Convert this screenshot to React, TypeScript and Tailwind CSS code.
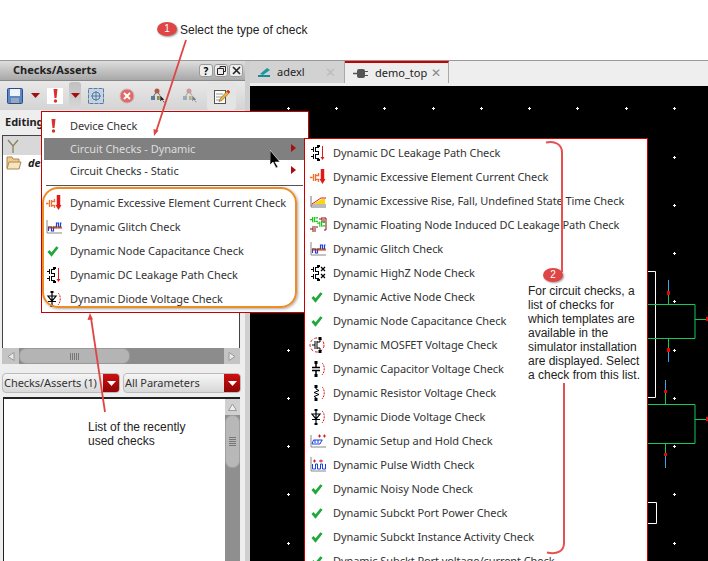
import React from "react";

const Tr = ({ c = "#000" }: { c?: string }) => (
  <g stroke={c} strokeWidth="1" fill="none" shapeRendering="crispEdges">
    <path d="M1.500 5.500h2M4.500 3v5M6.500 3v5M7 3.500h2.500V2M7 7.500h2.500V9M1.500 12.500h2M4.500 10v5M6.500 10v5M7 10.500h2.500V9M7 14.500h2.500V16" />
    <path d="M8 1h3v2H8zM8 15h3v2H8z" fill={c} stroke="none" />
  </g>
);
const Box = ({ children }: { children: React.ReactNode }) => (
  <svg width="18" height="18" viewBox="0 0 18 18" className="block">{children}</svg>
);
const Check = () => <Box><path d="M3.500 9l3 3.500 6-7.500" stroke="#1fa83c" strokeWidth="2.800" fill="none" /></Box>;
const Leak = () => <Box><Tr /><path d="M13.500 2v12" stroke="#e01818" /><path d="M11.500 13h4l-2 3z" fill="#e01818" /></Box>;
const Excess = () => <Box><path d="M1 9.500h2.500M4.500 6v7M6.500 6v7M7 7.500h2.500V5M7 11.500h2.500V14" stroke="#f4702a" strokeWidth="1.300" fill="none" /><path d="M13.500 1v10" stroke="#e01818" strokeWidth="3.500" /><path d="M10.500 11h6l-3 5z" fill="#e01818" /></Box>;
const Rise = () => <Box><path d="M2 4v11h15M2 13h15" stroke="#777" fill="none" /><path d="M4 12l9-5h3v5z" fill="#f5d90a" /><path d="M3 12l9-6h5" stroke="#e01818" fill="none" /></Box>;
const Floating = () => <Box><g transform="scale(.9)"><path d="M1 4h3M4 1v6M6 1v6M7 2h3M7 6h3M9 8h3M12 6v6M14 6v6M15 7h3M15 11h3" stroke="#18c818" strokeWidth="1.300" fill="none" /></g><path d="M1 13h3M4 10v6M6 10v6M7 11h2M10 3h3M13 1v5M15 1v5M16 2h1v12h-2" stroke="#8a1010" fill="none" /></Box>;
const Glitch = () => <Box><path d="M2 2v13h15" stroke="#888" fill="none" /><path d="M3 9h14" stroke="#f5d90a" strokeWidth="2" /><path d="M3.500 13V9h3v4h2V9h3V5h2v4h2V5h1" stroke="#1a3fe0" strokeWidth="1.200" fill="none" /><path d="M3 10h14" stroke="#e01818" /></Box>;
const HighZ = () => <Box><Tr /><path d="M12 3l4 4M16 3l-4 4M12 10l4 4M16 10l-4 4" stroke="#000" strokeWidth="1.200" /></Box>;
const Dash = ({ d = "M13 3c3 2 3 9 0 12" }: { d?: string }) => <path d={d} stroke="#e01818" strokeDasharray="2 1" fill="none" />;
const Mosfet = () => <Box><circle cx="8" cy="9" r="7" stroke="#e01818" strokeDasharray="3 2" fill="none" /><path d="M3 9h3M6 5v8M8 5v8M8 6h3V2M8 12h3v4" stroke="#000" fill="none" /><rect x="9.500" y="1" width="3" height="3" /><rect x="9.500" y="14" width="3" height="3" /></Box>;
const Cap = () => <Box><path d="M7 2v5M7 11v5M3 7.500h8M3 10.500h8" stroke="#000" strokeWidth="1.500" /><rect x="5.500" y="1" width="3" height="3" /><rect x="5.500" y="14" width="3" height="3" /><Dash /></Box>;
const Res = () => <Box><path d="M7 3v2l3 1.500-5 2 5 2-5 2 2 1v2" stroke="#000" fill="none" /><rect x="5.500" y="1" width="3" height="3" /><rect x="5.500" y="14" width="3" height="3" /><Dash /></Box>;
const Diode = () => <Box><path d="M7 2v14M3 6h8L7 11zM3 11.500h8" stroke="#000" strokeWidth="1.200" fill="none" /><rect x="5.500" y="1" width="3" height="2" /><rect x="5.500" y="15" width="3" height="2" /><Dash /></Box>;
const Setup = () => <Box><path d="M2 3v12h15" stroke="#888" fill="none" /><path d="M3 12l1.500-4h9M3 12h8l2-4" stroke="#1a3fe0" fill="none" /><path d="M6 11V8M9 11V8" stroke="#1a3fe0" /><path d="M9 4h3M14 4h3M10.500 2.500v3M15.500 2.500v3" stroke="#e01818" /></Box>;
const Pulse = () => <Box><path d="M2 1v14h15" stroke="#888" fill="none" /><path d="M3.500 8v5h3V8h2v5h3V8h2v5h3V8" stroke="#1a3fe0" fill="none" /><path d="M4 5h3M10 5h4M5.500 3.500v3M12 3.500v3" stroke="#e01818" /></Box>;

const sub: [React.ReactNode, string][] = [
  [<Leak />, "Dynamic DC Leakage Path Check"],
  [<Excess />, "Dynamic Excessive Element Current Check"],
  [<Rise />, "Dynamic Excessive Rise, Fall, Undefined State Time Check"],
  [<Floating />, "Dynamic Floating Node Induced DC Leakage Path Check"],
  [<Glitch />, "Dynamic Glitch Check"],
  [<HighZ />, "Dynamic HighZ Node Check"],
  [<Check />, "Dynamic Active Node Check"],
  [<Check />, "Dynamic Node Capacitance Check"],
  [<Mosfet />, "Dynamic MOSFET Voltage Check"],
  [<Cap />, "Dynamic Capacitor Voltage Check"],
  [<Res />, "Dynamic Resistor Voltage Check"],
  [<Diode />, "Dynamic Diode Voltage Check"],
  [<Setup />, "Dynamic Setup and Hold Check"],
  [<Pulse />, "Dynamic Pulse Width Check"],
  [<Check />, "Dynamic Noisy Node Check"],
  [<Check />, "Dynamic Subckt Port Power Check"],
  [<Check />, "Dynamic Subckt Instance Activity Check"],
  [<Check />, "Dynamic Subckt Port voltage/current Check"],
];
const recent: [React.ReactNode, string][] = [
  [<Excess />, "Dynamic Excessive Element Current Check"],
  [<Glitch />, "Dynamic Glitch Check"],
  [<Check />, "Dynamic Node Capacitance Check"],
  [<Leak />, "Dynamic DC Leakage Path Check"],
  [<Diode />, "Dynamic Diode Voltage Check"],
];

const Tri = ({ white }: { white?: boolean }) => (
  <svg width="9" height="5" viewBox="0 0 9 5"><path d="M0 0h9L4.500 5z" fill={white ? "#fff" : "#a50f0f"} /></svg>
);
const TitleBtn = ({ children }: { children: React.ReactNode }) => (
  <div className="w-[14px] h-[13px] border border-[#999] rounded-[3px] bg-[#eeeeee] flex items-center justify-center">{children}</div>
);
const Tool = ({ children, cls = "" }: { children: React.ReactNode; cls?: string }) => (
  <div className={"flex items-center justify-center h-[28px] " + cls}>{children}</div>
);
const Combo = ({ label, w }: { label: string; w: string }) => (
  <div className={"flex h-[20px] rounded-[4px] border border-[#bbb] bg-gradient-to-b from-[#f6f6f6] to-[#d8d8d8] overflow-hidden " + w}>
    <div className="flex-1 pl-[1px] text-[11px] tracking-[-0.05px] leading-[18px] text-[#333] whitespace-nowrap overflow-hidden">{label}</div>
    <div className="w-[16px] shrink-0 bg-gradient-to-b from-[#cf1010] to-[#8f0606] flex items-center justify-center"><Tri white /></div>
  </div>
);
const Tree = ({ dim }: { dim?: boolean }) => (
  <svg width="16" height="16" viewBox="0 0 16 16" className={dim ? "opacity-50" : ""}><path d="M7 3L3 9M7 3l4 6" stroke="#666" /><circle cx="7" cy="3" r="2.500" fill="#b25a4a" /><rect x="1" y="8" width="4" height="4" fill="#5f7a96" /><rect x="7" y="8" width="4" height="4" fill="#8c8a50" /><path d="M10 7v7l2-2 2 3 1-1-2-2h2z" fill="#222" stroke="#fff" strokeWidth=".5" /></svg>
);
const Bang = () => (
  <svg width="5" height="14" viewBox="0 0 5 14"><path d="M.5 0h4L3.500 9h-2z" fill="#d93030" /><circle cx="2.500" cy="12" r="1.700" fill="#d93030" /></svg>
);

const xs = [288, 336, 384, 433, 481, 529, 577, 626, 674];
const ys = [108, 157, 205, 253, 301, 350, 398, 446, 494, 543];

export default function App() {
  return (
    <div className="relative w-[708px] h-[561px] overflow-hidden bg-white font-['Noto_Sans',sans-serif]">
      <div className="h-[61px] border-b border-[#999]" />
      <div className="flex h-[500px]">
        {/* Left dock */}
        <div className="w-[245px] shrink-0 flex flex-col bg-[#eeeeee]">
          <div className="h-[20px] flex items-center pl-[13px] pr-[2px] bg-gradient-to-b from-[#dedede] to-[#a8a8a8] border-b border-[#888]">
            <span className="flex-1 text-[11px] font-bold text-[#222]">Checks/Asserts</span>
            <div className="flex gap-[1px]">
              <TitleBtn><span className="text-[10px] font-bold leading-none">?</span></TitleBtn>
              <TitleBtn><svg width="9" height="9" viewBox="0 0 9 9"><path d="M3 2V.5h5.500v5H6.500M.5 2.500h6v6h-6z" fill="none" stroke="#222" /></svg></TitleBtn>
              <TitleBtn><svg width="9" height="9" viewBox="0 0 9 9"><path d="M1 1l7 7M8 1l-7 7" stroke="#222" strokeWidth="1.600" /></svg></TitleBtn>
            </div>
          </div>
          <div className="h-[29px] flex items-center bg-gradient-to-b from-[#e8e8e8] to-[#d4d4d4]">
            <Tool cls="w-[16px] ml-[7px]"><svg width="16" height="16" viewBox="0 0 16 16"><rect x=".5" y=".5" width="15" height="15" rx="1" fill="#5d88c4" stroke="#2a4f88" /><rect x="3" y="1" width="10" height="7" fill="#eef3fa" /><rect x="4" y="10" width="8" height="5" fill="#98a8bc" /></svg></Tool>
            <Tool cls="w-[9px] ml-[8px]"><Tri /></Tool>
            <Tool cls="w-[16px] ml-[7px]"><div className="w-[16px] h-[16px] bg-white flex items-center justify-center"><Bang /></div></Tool>
            <Tool cls="w-[12px] ml-[6px] rounded-[3px] bg-gradient-to-b from-[#c0c0c0] to-[#d8d8d8]"><Tri /></Tool>
            <Tool cls="w-[16px] ml-[7px]"><svg width="16" height="16" viewBox="0 0 16 16"><rect x=".5" y=".5" width="15" height="15" fill="#c5d4e4" stroke="#5b7b9e" strokeDasharray="4 1" /><circle cx="8" cy="8" r="4" fill="none" stroke="#5b7b9e" /><path d="M8 3v10M3 8h10" stroke="#5b7b9e" /></svg></Tool>
            <Tool cls="w-[16px] ml-[15px]"><svg width="16" height="16" viewBox="0 0 16 16"><circle cx="8" cy="8" r="7" fill="#e06a6a" stroke="#d7b0b0" /><path d="M5 5l6 6M11 5l-6 6" stroke="#fff" strokeWidth="2" /></svg></Tool>
            <Tool cls="w-[16px] ml-[15px]"><Tree /></Tool>
            <Tool cls="w-[16px] ml-[16px]"><Tree dim /></Tool>
            <Tool cls="w-[29px] ml-[9px] rounded-[3px] bg-[#e4e4e4]"><svg width="16" height="16" viewBox="0 0 16 16"><rect x=".5" y="2.500" width="11" height="13" fill="#fff" stroke="#555" /><path d="M2 6h7M2 9h6M2 12h5" stroke="#999" /><path d="M6 11L14 2l2 2-8 8.500-3 1z" fill="#e8b93c" stroke="#8a5a1a" strokeWidth=".6" /><path d="M14 2l2 2-1.500 1.500-2-2z" fill="#d93030" /></svg></Tool>
          </div>
          <div className="h-[25px] pl-[5px] pt-[4px] text-[11px] leading-[16px] font-bold text-[#222]">Editing</div>
          <div className="ml-[2px] mr-[5px] h-[213px] border-l border-r border-t border-[#444] bg-white">
            <div className="h-[19px] bg-[#d8d8d8] pl-[4px] flex items-center">
              <svg width="12" height="14" viewBox="0 0 12 14"><path d="M1 1l5 6 5-6M6 7v7" stroke="#8a8060" strokeWidth="1.300" fill="none" /></svg>
            </div>
            <div className="flex items-center h-[16px] pl-[3px] gap-[6px] bg-white">
              <svg width="16" height="14" viewBox="0 0 16 14"><path d="M1 1h5l1 2h6v9H1z" fill="#f2cb8a" stroke="#a88850" /><path d="M1 13l2-7h12l-2 7z" fill="#f8e5bf" stroke="#a88850" /></svg>
              <span className="text-[11px] font-bold italic text-[#222]">demo</span>
            </div>
          </div>
          <div className="ml-[2px] mr-[5px] h-[16px] flex bg-[#8c8c8c]">
            <div className="w-[17px] bg-[#c4c4c4] flex items-center justify-center"><svg width="8" height="9" viewBox="0 0 8 9"><path d="M7 .5v8L1 4.500z" fill="#e8e8e8" stroke="#999" /></svg></div>
            <div className="w-[111px] rounded-[7px] bg-[#b4b4b4] border border-[#9a9a9a] flex items-center justify-center"><div className="w-[9px] h-[7px] bg-[repeating-linear-gradient(90deg,#777_0,#777_1px,transparent_1px,transparent_2px)]" /></div>
            <div className="flex-1" />
            <div className="w-[16px] bg-[#c4c4c4] flex items-center justify-center"><svg width="8" height="9" viewBox="0 0 8 9"><path d="M1 .5v8L7 4.500z" fill="#e8e8e8" stroke="#999" /></svg></div>
          </div>
          <div className="flex gap-[3px] mx-[2px] mt-[9px] shrink-0">
            <Combo label="Checks/Asserts (1)" w="w-[118px]" />
            <Combo label="All Parameters" w="w-[118px]" />
          </div>
          <div className="ml-[3px] mr-[5px] mt-[4px] flex-1 flex border-t-2 border-l border-[#222] bg-white min-h-0">
            <div className="flex-1" />
            <div className="w-[15px] bg-[#8f8f8f] flex flex-col">
              <div className="h-[16px] bg-[#d0d0d0] flex items-center justify-center"><svg width="9" height="8" viewBox="0 0 9 8"><path d="M.5 7.500h8L4.500 1z" fill="#eee" stroke="#999" /></svg></div>
              <div className="h-[53px] rounded-[7px] bg-[#b8b8b8] border border-[#a0a0a0] flex items-center justify-center"><div className="w-[7px] h-[9px] bg-[repeating-linear-gradient(0deg,#777_0,#777_1px,transparent_1px,transparent_2px)]" /></div>
            </div>
          </div>
        </div>
        {/* Splitter */}
        <div className="w-[5px] shrink-0 bg-[#cfcfcf]" />
        {/* Editor */}
        <div className="flex-1 flex flex-col min-w-0">
          <div className="h-[22px] bg-[#eeeeee] flex items-stretch">
            <div className="w-[95px] bg-[#d2d2d2] border-r border-[#aaa] flex items-center pl-[8px]">
              <svg width="14" height="10" viewBox="0 0 14 10"><path d="M0 9h12" stroke="#1a8a9a" strokeWidth="2" /><path d="M2 7l7-6 3 2-7 5z" fill="#1a9a9a" /></svg>
              <span className="ml-[5px] text-[11px] text-[#222]">adexl</span>
              <span className="ml-[20px] text-[13px] leading-none text-[#bbb]">✕</span>
            </div>
            <div className="w-[104px] border-t-2 border-[#c80000] border-r border-r-[#aaa] bg-[#eeeeee] flex items-center pl-[8px]">
              <svg width="15" height="9" viewBox="0 0 15 9"><path d="M0 4.500h4" stroke="#555" strokeWidth="1.500" /><rect x="4" y="0" width="8" height="9" rx="2" fill="#555" /><path d="M12 2.500h3M12 6.500h3" stroke="#555" /></svg>
              <span className="ml-[7px] text-[11px] text-[#222]">demo_top</span>
              <span className="ml-[4px] text-[12px] leading-none text-[#888]">✕</span>
            </div>
          </div>
          <div className="h-[3px] bg-[#eeeeee]" />
          <div className="flex-1 bg-black" />
        </div>
      </div>

      {/* Canvas drawing */}
      <svg className="absolute left-0 top-0 pointer-events-none" width="708" height="561" viewBox="0 0 708 561">
        {xs.flatMap((x) => ys.map((y) => (
          <path key={x + "-" + y} d={`M${x - 1.5} ${y + .5}h3M${x} ${y - 1}v3`} stroke="#fff" strokeWidth="1" transform="translate(.5,0)" />
        )))}
        <path d="M648 271.500h7.500v126H648M648 502.500h8.500v21H648" stroke="#fff" fill="none" />
        <path d="M648 304.500h47v34h-47M695 319.500h13M668.500 293v11M668.500 338v12M648 404.500h47v39h-47M695 419.500h13M665.500 392v12M665.500 443v12" stroke="#14c85a" fill="none" />
        <path d="M668.500 280v13M668.500 350v12M665.500 380v12M665.500 455v13" stroke="#33a8e8" fill="none" />
        <path d="M667 291h3v4h-3zM667 348h3v4h-3zM664 390h3v3h-3zM664 453h3v3h-3zM706 317h2v4h-2zM706 417h2v4h-2z" fill="#f00000" />
      </svg>

      {/* Primary menu */}
      <div className="absolute left-[41px] top-[111px] w-[268px] h-[202px] border border-[#c80000] bg-white text-[11px] tracking-[-0.05px] text-[#333]">
        <div className="h-[25px] flex items-center pl-[28px] pt-[1px] mt-[1px] relative">
          <span className="absolute left-[9px] top-[6px]"><Bang /></span>
          Device Check
        </div>
        <div className="ml-[2px] h-[22px] bg-[#808080] text-[#dddddd] flex items-center pl-[26px] w-[260px]">Circuit Checks - Dynamic</div>
        <div className="h-[22px] flex items-center pl-[28px]">Circuit Checks - Static</div>
        <div className="mx-[4px] mt-[3px] w-[257px] h-px bg-[#555]" />
        <div className="mt-[5px]">
          {recent.map(([icon, label]) => (
            <div key={label} className="h-[24px] flex items-center pl-[28px] relative">
              <span className="absolute left-[3px] top-[3px]">{icon}</span>{label}
            </div>
          ))}
        </div>
        <svg className="absolute left-[249px] top-[32px]" width="7" height="32" viewBox="0 0 7 32"><path d="M0 0l5 4-5 4zM0 22l5 4-5 4z" fill="#a50f0f" /></svg>
      </div>
      {/* Orange highlight */}
      <div className="absolute left-[42px] top-[187px] w-[255px] h-[121px] rounded-[16px] border-2 border-[#f08a24] shadow-[1px_1px_3px_rgba(0,0,0,.35)]" />

      {/* Submenu */}
      <div className="absolute left-[304px] top-[138px] w-[344px] h-[430px] border border-[#c80000] bg-white text-[11px] tracking-[-0.07px] text-[#333] pt-[2px]">
        {sub.map(([icon, label]) => (
          <div key={label} className="h-[24px] flex items-center pl-[28px] relative whitespace-nowrap">
            <span className="absolute left-[4px] top-[3px]">{icon}</span>{label}
          </div>
        ))}
      </div>

      {/* Annotations */}
      <div className="absolute left-[157px] top-[22px] w-[20px] h-[14px] rounded-[50%] bg-[#e04545] text-white text-[10px] leading-[14px] text-center font-['Liberation_Sans',sans-serif] shadow-[1px_1px_2px_rgba(0,0,0,.4)]">1</div>
      <div className="absolute left-[180px] top-[23px] text-[12px] leading-[14px] text-[#222] font-['Liberation_Sans',sans-serif]">Select the type of check</div>
      <div className="absolute left-[88px] top-[420px] text-[12px] leading-[14px] text-[#222] font-['Liberation_Sans',sans-serif]">List of the recently<br />used checks</div>
      <div className="absolute left-[543px] top-[268px] w-[20px] h-[14px] rounded-[50%] bg-[#e04545] text-white text-[10px] leading-[14px] text-center font-['Liberation_Sans',sans-serif] shadow-[1px_1px_2px_rgba(0,0,0,.4)]">2</div>
      <div className="absolute left-[528px] top-[284px] text-[12px] leading-[14px] text-[#222] font-['Liberation_Sans',sans-serif] whitespace-nowrap">For circuit checks, a<br />list of checks for<br />which templates are<br />available in the<br />simulator installation<br />are displayed. Select<br />a check from this list.</div>

      <svg className="absolute left-0 top-0 pointer-events-none" width="708" height="561" viewBox="0 0 708 561">
        <path d="M186 40L156 132" stroke="#e04545" strokeWidth="1.800" />
        <path d="M154 136l-.5-7 5 1.500z" fill="#e04545" />
        <path d="M105 412L91 318" stroke="#e04545" strokeWidth="1.800" />
        <path d="M90 313l-2.500 7 5.500-.5z" fill="#e04545" />
        <path d="M546 142.500c9-2 16 2 16 10v119.500M564 383v160c0 8-7 12-17 9.500" stroke="#e85050" strokeWidth="2" fill="none" />
      </svg>

      {/* Mouse cursor */}
      <svg className="absolute left-[270px] top-[150px]" width="12" height="20" viewBox="0 0 12 20"><path d="M0 0v15l3-3 3 6 2-1-3-5h5z" fill="#000" stroke="#fff" strokeWidth=".6" /></svg>
    </div>
  );
}
